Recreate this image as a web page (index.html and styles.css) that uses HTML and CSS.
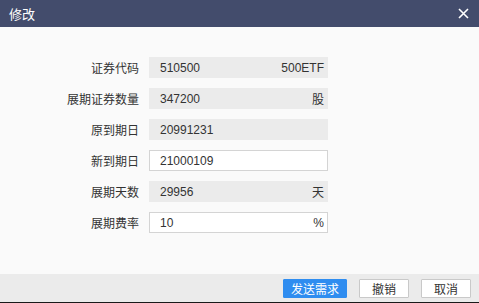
FILE: index.html
```html
<!DOCTYPE html>
<html lang="zh">
<head>
<meta charset="utf-8">
<link rel="stylesheet" href="styles.css">
</head>
<body>
<div class="dialog">
  <div class="titlebar">
    <span class="title">修改</span>
    <svg class="close" width="11" height="11" viewBox="0 0 11 11"><path d="M1 1L10 10M10 1L1 10" stroke="#fff" stroke-width="1.6" fill="none"/></svg>
  </div>
  <div class="content">
    <div class="form">
      <label class="lbl">证券代码</label>
      <div class="field ro"><span>510500</span><span>500ETF</span></div>
      <label class="lbl">展期证券数量</label>
      <div class="field ro"><span>347200</span><span>股</span></div>
      <label class="lbl">原到期日</label>
      <div class="field ro"><span>20991231</span><span></span></div>
      <label class="lbl">新到期日</label>
      <div class="field edit"><span>21000109</span><span></span></div>
      <label class="lbl">展期天数</label>
      <div class="field ro"><span>29956</span><span>天</span></div>
      <label class="lbl">展期费率</label>
      <div class="field edit"><span>10</span><span>%</span></div>
    </div>
  </div>
  <div class="footer">
    <button class="btn primary">发送需求</button>
    <button class="btn">撤销</button>
    <button class="btn">取消</button>
  </div>
</div>
</body>
</html>
```

FILE: styles.css
```css
* { box-sizing: border-box; }
html, body { margin: 0; padding: 0; }
body {
  width: 479px;
  height: 303px;
  overflow: hidden;
  font-family: "Liberation Sans", "Noto Sans CJK SC", sans-serif;
  font-size: 12px;
  color: #333;
  background: #fafafa;
}
.dialog {
  display: flex;
  flex-direction: column;
  height: 303px;
  border-bottom: 1px solid #1a1a1a;
}
.titlebar {
  height: 27px;
  background: #434c6c;
  display: flex;
  align-items: center;
  justify-content: space-between;
  padding: 0 10px 0 9px;
  color: #fff;
}
.title {
  font-size: 13px;
  font-family: "Noto Sans CJK SC", sans-serif;
}
.close { display: block; }
.content {
  flex: 1;
  background: #fafafa;
  padding-top: 30px;
}
.form {
  display: grid;
  grid-template-columns: 139px 179px;
  column-gap: 10px;
  row-gap: 10px;
  grid-auto-rows: 21px;
}
.lbl {
  text-align: right;
  align-self: center;
  font-family: "Noto Sans CJK SC", sans-serif;
  font-size: 12px;
  color: #333;
  line-height: 21px;
}
.field {
  display: flex;
  justify-content: space-between;
  align-items: center;
  padding: 0 4px 0 11px;
  color: #333;
}
.ro { background: #ebebeb; }
.edit { background: #fff; border: 1px solid #d4d4d4; padding-left: 10px; padding-right: 3px; }
.footer {
  height: 28px;
  background: #ebebeb;
  display: flex;
  justify-content: flex-end;
  align-items: center;
  gap: 12px;
  padding-right: 8px;
  padding-top: 1px;
}
.btn {
  height: 19px;
  width: 50px;
  padding: 0;
  font-family: "Noto Sans CJK SC", sans-serif;
  font-size: 12px;
  color: #333;
  background: #fff;
  border: 1px solid #c9c9c9;
  border-radius: 1px;
  line-height: 17px;
}
.btn.primary {
  width: 64px;
  background: #2f8df0;
  border-color: #2f8df0;
  color: #fff;
}
```
